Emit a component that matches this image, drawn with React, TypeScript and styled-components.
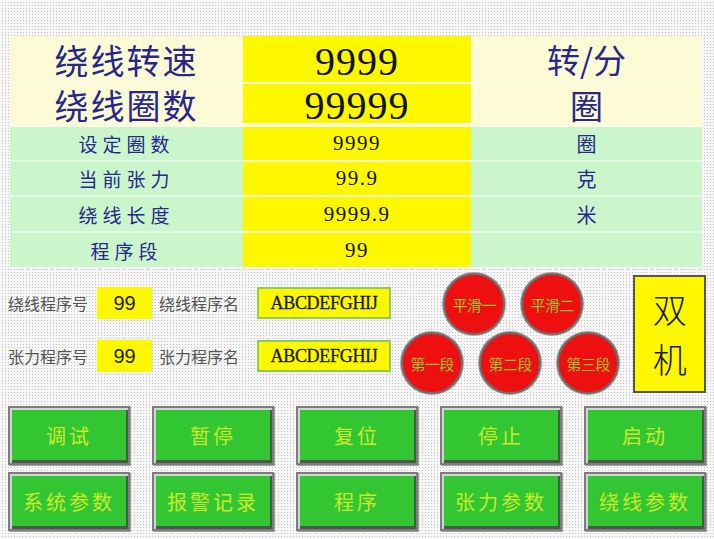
import React from 'react';
import styled, { createGlobalStyle, css } from 'styled-components';

const GlobalStyle = createGlobalStyle`
  html, body {
    margin: 0;
    padding: 0;
  }
  body {
    width: 714px;
    height: 539px;
    overflow: hidden;
    background-color: #c4c4c4;
    background-image:
      linear-gradient(90deg, #f7f7f7 2px, transparent 2px),
      linear-gradient(#f7f7f7 2px, transparent 2px);
    background-size: 3px 3px;
    font-family: "Noto Sans CJK SC", "Noto Sans", sans-serif;
  }
`;

const Page = styled.div`
  width: 714px;
  height: 539px;
  box-sizing: border-box;
  padding: 36px 8px 0 8px;
  display: flex;
  flex-direction: column;
`;

const Table = styled.div`
  margin-left: 2px;
  width: 692px;
  display: grid;
  grid-template-columns: 233px 228px 231px;
  grid-template-rows: 48px 41px 2px 35px 35px 36px 34px;
`;

const Spacer = styled.div`
  grid-column: 1 / 4;
  background: #fbfbe8;
`;

const Cell = styled.div<{ $big?: boolean; $last?: boolean }>`
  display: flex;
  align-items: center;
  justify-content: center;
  box-sizing: border-box;
  background: ${({ $big }) => ($big ? '#fdfbd6' : '#cbf6cc')};
  border-bottom: ${({ $last }) => ($last ? 'none' : '2px solid rgba(255, 255, 255, 0.45)')};
`;

const Label = styled(Cell)`
  color: #27278c;
  ${({ $big }) =>
    $big
      ? css`
          font-size: 34px;
          letter-spacing: 2px;
        `
      : css`
          font-size: 19px;
          letter-spacing: 5px;
        `}
`;

const Value = styled(Cell)`
  background: #fdf700;
  border-bottom: ${({ $last }) => ($last ? 'none' : '2px solid #fdfbd0')};
  color: #111;
  font-family: "Liberation Serif", serif;
  ${({ $big }) =>
    $big
      ? css`
          font-size: 40px;
          letter-spacing: 1px;
          padding-top: 4px;
        `
      : css`
          font-size: 21px;
          letter-spacing: 1.5px;
        `}
`;

const Unit = styled(Cell)`
  color: #27278c;
  font-size: ${({ $big }) => ($big ? '33px' : '20px')};
`;

const Middle = styled.div`
  display: flex;
  align-items: flex-start;
  padding-top: 6px;
  height: 132px;
  box-sizing: border-box;
`;

const Fields = styled.div`
  display: flex;
  flex-direction: column;
  gap: 21px;
  padding-top: 14px;
  width: 395px;
`;

const FieldRow = styled.div`
  display: flex;
  align-items: center;
`;

const FieldLabel = styled.span`
  color: #555;
  font-size: 16px;
  width: 89px;
  white-space: nowrap;
`;

const NameLabel = styled(FieldLabel)`
  width: 98px;
  padding-left: 7px;
`;

const NumBox = styled.div`
  width: 55px;
  height: 32px;
  background: #fdf700;
  display: flex;
  align-items: center;
  justify-content: center;
  font-family: "Liberation Sans", sans-serif;
  font-size: 20px;
  color: #222;
`;

const NameBox = styled.div`
  width: 134px;
  height: 32px;
  box-sizing: border-box;
  background: #fdf700;
  border: 2px solid #8fcc55;
  display: flex;
  align-items: center;
  justify-content: center;
  font-family: "Liberation Serif", serif;
  font-size: 18px;
  color: #1a1a1a;
  letter-spacing: -0.3px;
  -webkit-text-stroke: 0.3px #1a1a1a;
`;

const Cluster = styled.div`
  display: flex;
  flex-direction: column;
  width: 224px;
`;

const CircleRow = styled.div<{ $offset?: number; $lift?: number }>`
  display: flex;
  gap: 16px;
  padding-left: ${({ $offset }) => $offset ?? 0}px;
  margin-top: ${({ $lift }) => ($lift ? -$lift : 0)}px;
`;

const Circle = styled.div`
  width: 62px;
  height: 62px;
  box-sizing: border-box;
  border-radius: 50%;
  background: #ee1010;
  border: 2px solid #6d6d6d;
  box-shadow: 0 0 0 1px #b0a0a0;
  display: flex;
  align-items: center;
  justify-content: center;
  color: #a0c02a;
  font-size: 15px;
  letter-spacing: -0.5px;
`;

const ModeBox = styled.div`
  margin-left: 9px;
  margin-top: 2px;
  width: 73px;
  height: 118px;
  box-sizing: border-box;
  background: #fdf700;
  border: 2px solid #555;
  display: flex;
  flex-direction: column;
  align-items: center;
  justify-content: center;
  color: #1a1a1a;
`;

const ModeChar = styled.div`
  font-size: 34px;
  line-height: 50px;
  height: 50px;
  font-weight: 300;
`;

const Buttons = styled.div`
  display: grid;
  grid-template-columns: repeat(5, 122px);
  grid-auto-rows: 59px;
  column-gap: 22px;
  row-gap: 7px;
  margin-top: 7px;
`;

const Button = styled.div`
  box-sizing: border-box;
  background: #33c633;
  border: 2px solid #7c7c7c;
  box-shadow: inset 2px 2px 0 #cfd8cf, inset -2px -3px 0 #4c5a4c, 1px 1px 0 #a0a0a0;
  display: flex;
  align-items: center;
  justify-content: center;
  color: #c8ec2a;
  font-size: 20px;
  letter-spacing: 3px;
`;

const rows = [
  { label: '绕线转速', value: '9999', unit: '转/分', big: true },
  { label: '绕线圈数', value: '99999', unit: '圈', big: true },
  { label: '设定圈数', value: '9999', unit: '圈' },
  { label: '当前张力', value: '99.9', unit: '克' },
  { label: '绕线长度', value: '9999.9', unit: '米' },
  { label: '程序段', value: '99', unit: '' },
];

const buttons = ['调试', '暂停', '复位', '停止', '启动', '系统参数', '报警记录', '程序', '张力参数', '绕线参数'];

export default function App() {
  return (
    <>
      <GlobalStyle />
      <Page>
        <Table>
          {rows.map((r, i) => (
            <React.Fragment key={r.label}>
              {i === 2 && <Spacer />}
              <Label $big={r.big} $last={i === 1 || i === rows.length - 1}>{r.label}</Label>
              <Value $big={r.big} $last={i === rows.length - 1}>{r.value}</Value>
              <Unit $big={r.big} $last={i === 1 || i === rows.length - 1}>{r.unit}</Unit>
            </React.Fragment>
          ))}
        </Table>

        <Middle>
          <Fields>
            <FieldRow>
              <FieldLabel>绕线程序号</FieldLabel>
              <NumBox>99</NumBox>
              <NameLabel>绕线程序名</NameLabel>
              <NameBox>ABCDEFGHIJ</NameBox>
            </FieldRow>
            <FieldRow>
              <FieldLabel>张力程序号</FieldLabel>
              <NumBox>99</NumBox>
              <NameLabel>张力程序名</NameLabel>
              <NameBox>ABCDEFGHIJ</NameBox>
            </FieldRow>
          </Fields>
          <Cluster>
            <CircleRow $offset={42}>
              <Circle>平滑一</Circle>
              <Circle>平滑二</Circle>
            </CircleRow>
            <CircleRow $lift={3}>
              <Circle>第一段</Circle>
              <Circle>第二段</Circle>
              <Circle>第三段</Circle>
            </CircleRow>
          </Cluster>
          <ModeBox>
            <ModeChar>双</ModeChar>
            <ModeChar>机</ModeChar>
          </ModeBox>
        </Middle>

        <Buttons>
          {buttons.map(b => (
            <Button key={b}>{b}</Button>
          ))}
        </Buttons>
      </Page>
    </>
  );
}
